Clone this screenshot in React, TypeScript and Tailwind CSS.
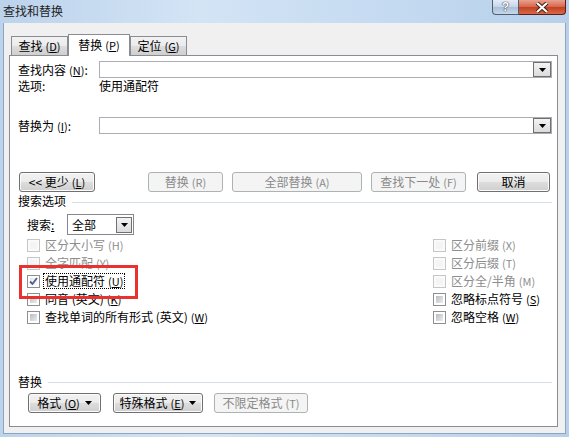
import clsx from 'clsx'
import type { ReactNode } from 'react'

function Arrow({ className }: { className?: string }) {
  return (
    <svg width="7" height="4" viewBox="0 0 7 4" className={className}>
      <path d="M0 0h7L3.5 4z" fill="#000" />
    </svg>
  )
}

function Key({ k, plain }: { k: string; plain?: boolean }) {
  return (
    <span className="ml-[3px] text-[11px]">
      ({plain ? k : <u>{k}</u>})
    </span>
  )
}

function Btn({
  children,
  className,
  disabled,
}: {
  children: ReactNode
  className?: string
  disabled?: boolean
}) {
  return (
    <div
      className={clsx(
        'flex h-full items-center justify-center rounded-[3px] border leading-[14px]',
        disabled
          ? 'border-[#adb2b5] bg-[#f4f4f4] text-[#8a8a8a]'
          : 'border-[#707070] bg-[linear-gradient(#f2f2f2_0%,#ebebeb_50%,#dddddd_50%,#cfcfcf_100%)] text-black shadow-[inset_0_0_0_1px_#fbfbfb]',
        className,
      )}
    >
      {children}
    </div>
  )
}

function Combo() {
  return (
    <div className="flex h-[17px] flex-1 border border-[#abadb3] bg-white">
      <div className="ml-auto flex h-full w-[18px] items-center justify-center border border-[#707070] bg-[linear-gradient(#f3f3f3,#dcdcdc)]">
        <Arrow />
      </div>
    </div>
  )
}

function Check({
  label,
  disabled,
  checked,
  focus,
}: {
  label: ReactNode
  disabled?: boolean
  checked?: boolean
  focus?: boolean
}) {
  return (
    <div className="flex h-[18px] items-center">
      <span
        className={clsx(
          'flex h-[13px] w-[13px] shrink-0 border p-[2px]',
          disabled ? 'border-[#c6c6c6] bg-[#fafafa]' : 'border-[#8e8f8f] bg-white',
        )}
      >
        <span
          className={clsx(
            'relative flex flex-1',
            disabled
              ? 'bg-[#f4f4f4]'
              : checked
                ? 'bg-[linear-gradient(135deg,#e6e6e6,#fbfbfb)]'
                : 'bg-[linear-gradient(135deg,#b9bdc2,#eceded)]',
          )}
        >
          {checked && (
            <svg width="11" height="11" viewBox="0 0 11 11" className="absolute -left-[2px] -top-[2px]">
              <path d="M2 5.5l2.5 2.5L9 2" stroke="#4a5f97" strokeWidth="1.8" fill="none" />
            </svg>
          )}
        </span>
      </span>
      <span
        className={clsx(
          'ml-[4px] whitespace-nowrap px-[1px] leading-[14px]',
          disabled ? 'text-[#8d8d8d]' : 'text-black',
          focus && 'outline-1 outline-dotted outline-black',
        )}
      >
        {label}
      </span>
    </div>
  )
}

export default function App() {
  return (
    <div className="flex h-[437px] w-[569px] flex-col overflow-hidden bg-[linear-gradient(90deg,#bcd3ec_0%,#d3e4f5_35%,#c4daf1_70%,#b7cfea_100%)] font-['Noto_Sans_CJK_SC',sans-serif] text-[12px] text-black">
      <div className="flex h-[23px] shrink-0 items-start">
        <span className="ml-[3px] mt-[4px] leading-[14px] text-[#1e1e1e]">查找和替换</span>
        <div className="ml-auto mr-[3px] flex h-[15px]">
          <div className="flex w-[27px] items-center justify-center rounded-bl-[4px] border border-t-0 border-[#4f5f73] bg-[linear-gradient(#e3ecf6,#c4d5e8_50%,#a9bfd8_51%,#c6d8ea)] font-['Liberation_Sans',sans-serif] text-[12px] font-bold leading-[12px] text-white [text-shadow:0_0_1px_#223,0_0_1px_#223]">
            ?
          </div>
          <div className="flex w-[47px] items-center justify-center rounded-br-[4px] border border-l-0 border-t-0 border-[#5a1f14] bg-[linear-gradient(#eaa18f,#d6654a_50%,#c2401f_51%,#d9684a)]">
            <svg width="14" height="11" viewBox="0 0 14 11">
              <path d="M2 1l10 9M12 1L2 10" stroke="#3b1a14" strokeWidth="4" />
              <path d="M2 1l10 9M12 1L2 10" stroke="#fff" strokeWidth="2.2" />
            </svg>
          </div>
        </div>
      </div>

      <div className="mx-[3px] mb-[3px] flex flex-1 flex-col border border-t-0 border-[#8da5c0] bg-[#f0f0f0]">
        <div className="ml-[7px] mt-[11px] flex h-[21px] items-end">
          <div className="flex h-[19px] w-[57px] items-center justify-center border border-b-0 border-[#898c95] bg-[linear-gradient(#f2f2f2,#ebebeb_50%,#dddddd_51%,#cfcfcf)] leading-[14px]">
            查找<Key k="D" />
          </div>
          <div className="relative z-10 -mb-px flex h-[22px] w-[62px] items-center justify-center border border-b-0 border-[#898c95] bg-white pb-[1px] leading-[14px]">
            替换<Key k="P" />
          </div>
          <div className="flex h-[19px] w-[57px] items-center justify-center border border-b-0 border-[#898c95] bg-[linear-gradient(#f2f2f2,#ebebeb_50%,#dddddd_51%,#cfcfcf)] leading-[14px]">
            定位<Key k="G" />
          </div>
        </div>

        <div className="mb-[6px] ml-[5px] mr-[7px] flex flex-1 flex-col border border-[#898c95] bg-white pl-[8px] pr-[5px]">
          <div className="mt-[5px] flex h-[17px] items-center">
            <span className="w-[81px] leading-[14px]">
              查找内容<Key k="N" />:
            </span>
            <Combo />
          </div>
          <div className="flex h-[16px] items-center leading-[14px]">
            <span className="w-[81px]">选项:</span>
            <span>使用通配符</span>
          </div>
          <div className="mt-[23px] flex h-[17px] items-center">
            <span className="w-[81px] leading-[14px]">
              替换为<Key k="I" />:
            </span>
            <Combo />
          </div>

          <div className="mt-[38px] flex h-[20px]">
            <Btn className="ml-[1px] w-[76px]">
              &lt;&lt; 更少<Key k="L" />
            </Btn>
            <Btn disabled className="ml-[53px] w-[75px]">
              替换<Key plain k="R" />
            </Btn>
            <Btn disabled className="ml-[9px] w-[130px]">
              全部替换<Key plain k="A" />
            </Btn>
            <Btn disabled className="ml-[9px] w-[95px]">
              查找下一处<Key plain k="F" />
            </Btn>
            <Btn className="ml-[11px] w-[73px] border-[#3c3c3c]">取消</Btn>
          </div>

          <div className="mt-[2px] flex h-[14px] items-center">
            <span className="leading-[14px]">搜索选项</span>
            <div className="ml-[6px] mt-[3px] h-px flex-1 bg-[#d5dfe5]" />
          </div>

          <div className="mt-[6px] flex h-[21px] items-center">
            <span className="ml-[9px] w-[40px] leading-[14px]">
              搜索<u>:</u>
            </span>
            <div className="flex h-full w-[67px] items-center border border-[#828790] bg-white">
              <span className="ml-[4px] leading-[14px]">全部</span>
              <div className="ml-auto mr-[1px] flex h-[16px] w-[16px] items-center justify-center border border-[#707070] bg-[linear-gradient(#f3f3f3,#dcdcdc)]">
                <Arrow />
              </div>
            </div>
          </div>

          <div className="relative mt-[1px] flex">
            <div className="ml-[9px] flex flex-col">
              <Check disabled label={<>区分大小写<Key plain k="H" /></>} />
              <Check disabled label={<>全字匹配<Key plain k="Y" /></>} />
              <Check checked focus label={<>使用通配符<Key k="U" /></>} />
              <Check label={<>同音 (英文)<Key k="K" /></>} />
              <Check label={<>查找单词的所有形式 (英文)<Key k="W" /></>} />
            </div>
            <div className="ml-auto flex w-[119px] flex-col">
              <Check disabled label={<>区分前缀<Key plain k="X" /></>} />
              <Check disabled label={<>区分后缀<Key plain k="T" /></>} />
              <Check disabled label={<>区分全/半角<Key plain k="M" /></>} />
              <Check label={<>忽略标点符号<Key k="S" /></>} />
              <Check label={<>忽略空格<Key k="W" /></>} />
            </div>
            <div className="pointer-events-none absolute left-[1px] top-[29px] h-[34px] w-[119px] border-[3px] border-[#e8322f]" />
          </div>

          <div className="mt-[49px] flex h-[14px] items-center">
            <span className="leading-[14px]">替换</span>
            <div className="ml-[6px] h-px flex-1 bg-[#d5dfe5]" />
          </div>

          <div className="mt-[4px] flex h-[20px]">
            <Btn className="ml-[10px] w-[73px]">
              格式<Key k="O" />
              <Arrow className="ml-[5px]" />
            </Btn>
            <Btn className="ml-[12px] w-[90px]">
              特殊格式<Key k="E" />
              <Arrow className="ml-[5px]" />
            </Btn>
            <Btn disabled className="ml-[11px] w-[94px]">
              不限定格式<Key plain k="T" />
            </Btn>
          </div>
        </div>
      </div>
    </div>
  )
}
